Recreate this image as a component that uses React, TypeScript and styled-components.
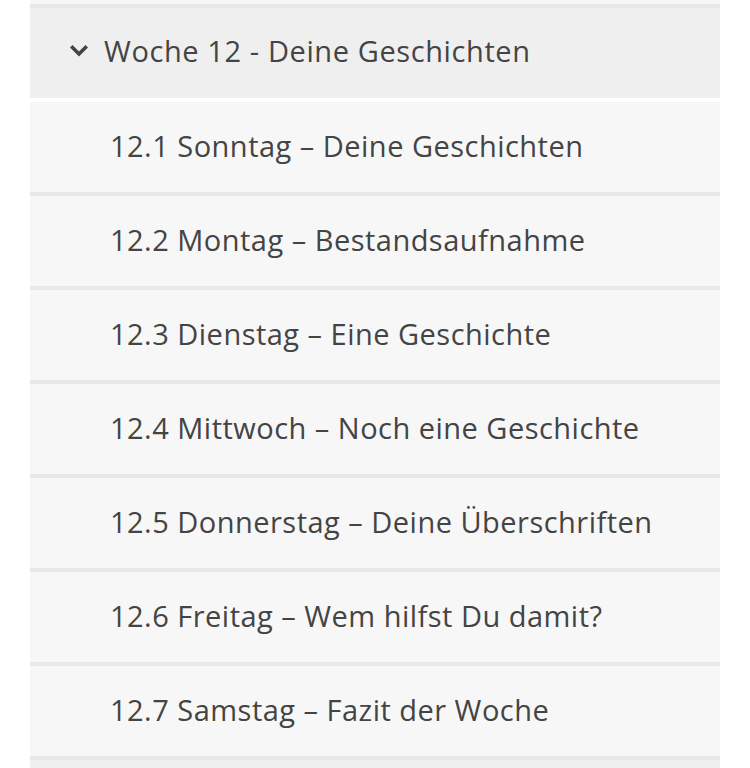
import styled, { createGlobalStyle } from "styled-components";

const GlobalStyle = createGlobalStyle`
  html, body {
    margin: 0;
    padding: 0;
    background: #ffffff;
  }
`;

const Panel = styled.div`
  width: 690px;
  margin-left: 30px;
  height: 768px;
  overflow: hidden;
  font-family: "Open Sans", "Liberation Sans", sans-serif;
  color: #444444;
`;

const Prev = styled.div`
  height: 4px;
  background: #f7f7f7;
  border-bottom: 4px solid #e8e8e8;
`;

const Header = styled.div`
  box-sizing: border-box;
  height: 90px;
  background: #efefef;
  display: flex;
  align-items: center;
  gap: 16px;
  padding: 0 0 5px 40px;
  margin-bottom: 4px;
  font-size: 29px;
  letter-spacing: 0.6px;
`;

const Chevron = styled.svg`
  width: 18px;
  height: 12px;
  flex-shrink: 0;
`;

const Lesson = styled.div`
  box-sizing: border-box;
  height: 94px;
  background: #f7f7f7;
  border-bottom: 4px solid #e8e8e8;
  display: flex;
  align-items: center;
  padding: 0 0 4px 80px;
  font-size: 29px;
  letter-spacing: 0.48px;
`;

const NextHeader = styled.div`
  height: 90px;
  background: #efefef;
`;

const lessons = [
  "12.1 Sonntag – Deine Geschichten",
  "12.2 Montag – Bestandsaufnahme",
  "12.3 Dienstag – Eine Geschichte",
  "12.4 Mittwoch – Noch eine Geschichte",
  "12.5 Donnerstag – Deine Überschriften",
  "12.6 Freitag – Wem hilfst Du damit?",
  "12.7 Samstag – Fazit der Woche",
];

const App = () => {
  return (
    <>
      <GlobalStyle />
      <Panel>
        <Prev />
        <Header>
          <Chevron viewBox="0 0 18 12">
            <path
              d="M2.5 2.5 L9 9 L15.5 2.5"
              fill="none"
              stroke="#444"
              strokeWidth="3.6"
              strokeLinecap="square"
            />
          </Chevron>
          Woche 12 - Deine Geschichten
        </Header>
        {lessons.map((title) => (
          <Lesson key={title}>{title}</Lesson>
        ))}
        <NextHeader />
      </Panel>
    </>
  );
};

export default App;
